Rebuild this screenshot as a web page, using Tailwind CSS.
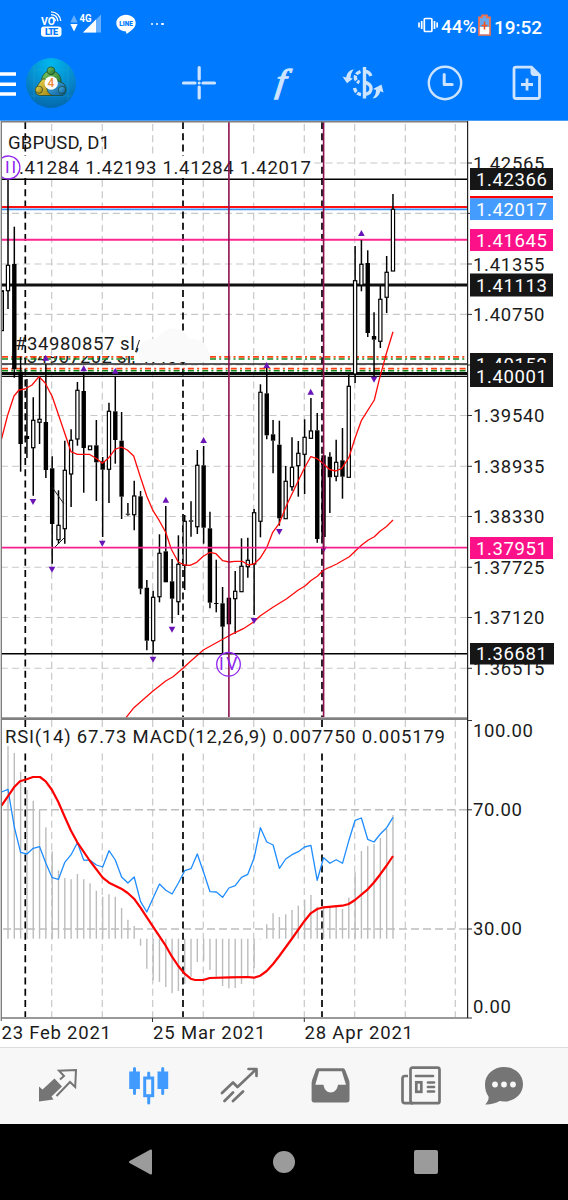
<!DOCTYPE html>
<html lang="en">
<head>
    <meta charset="UTF-8">
    <meta name="viewport" content="width=device-width, initial-scale=1.0">
    <title>GBPUSD, D1</title>
    <script src="https://cdn.jsdelivr.net/npm/@tailwindcss/browser@4"></script>
</head>
<body class="w-[568px] h-[1200px] bg-white overflow-hidden flex flex-col font-['Roboto',sans-serif]">
    <header class="h-[121px] shrink-0 bg-[#007aff] border-b border-[#4a9cf5]">
        <!-- status bar -->
        <div class="h-[46px] flex items-start pt-2.5 pl-10 pr-[25px] text-white">
            <svg class="w-[22px] h-7" viewBox="0 0 22 28" fill="none" stroke="#fff">
                <text x="1" y="15" font-size="11.5" font-weight="700" fill="#fff" stroke="none" textLength="14" lengthAdjust="spacingAndGlyphs">VO</text>
                <path d="M11 1.8c5.5 0 9.3 4 9.7 9.2M11 4.6c3.9 0 6.5 2.800 6.900 6.600M11.500 7.200c2.300.400 3.600 1.800 3.900 4" stroke-width="1.300"/>
                <rect x="1" y="16.500" width="20.500" height="10.300" rx="3" fill="#fff" stroke="none"/>
                <text x="5" y="25" font-size="9" font-weight="900" fill="#007aff" stroke="none" textLength="13">LTE</text>
            </svg>
            <svg class="w-8 h-7 ml-2" viewBox="0 0 32 28">
                <path d="M4 5l3.700 7.500H.3z" fill="#66afff"/>
                <path d="M4 21.500l3.700-7.500H.3z" fill="#fff"/>
                <text x="9.500" y="11.500" font-size="11" font-weight="700" fill="#fff" textLength="12" lengthAdjust="spacingAndGlyphs">4G</text>
                <path d="M31 4.500v18H13z" fill="#66afff"/>
                <path d="M26 9.500v13H13z" fill="#fff"/>
            </svg>
            <svg class="w-5 h-5 ml-[13.500px] mt-[3.500px]" viewBox="0 0 20 20">
                <path d="M10 .7c5.500 0 9.700 3.600 9.700 8.300 0 4.500-4.500 8-9 10.700-.6.200-.5-1-.6-2.300C4.500 17.300.3 13.600.3 9S4.500.7 10 .7z" fill="#fff"/>
                <text x="3.300" y="11.700" font-size="7" font-weight="900" fill="#007aff" textLength="13.500" lengthAdjust="spacingAndGlyphs">LINE</text>
            </svg>
            <div class="flex gap-[2.500px] ml-[15px] mt-[12.500px]">
                <span class="size-[2.700px] rounded-full bg-white"></span>
                <span class="size-[2.700px] rounded-full bg-white"></span>
                <span class="size-[2.700px] rounded-full bg-white"></span>
            </div>
            <svg class="w-5 h-4 ml-auto mt-[6.500px]" viewBox="0 0 20 16" fill="none" stroke="#fff" stroke-width="1.700">
                <rect x="6.300" y="1.500" width="7.600" height="13" rx="1"/>
                <path d="M3.700 4v8M1 5.500v5M16.500 4v8M19.200 5.500v5"/>
            </svg>
            <svg class="w-[37px] h-7 ml-[3px]" viewBox="0 0 37 28"><text x="0" y="22.700" font-size="18.500" font-weight="500" fill="#fff" textLength="35.500" lengthAdjust="spacingAndGlyphs">44%</text></svg>
            <svg class="w-[13px] h-[22px] mt-[3.500px]" viewBox="0 0 13 22">
                <path d="M4 1.300h5v2h3v17.700H1V3.300h3z" fill="#66a8f0" stroke="#f4704a" stroke-width="1.700"/>
                <path d="M1.800 13h9.400v7.200H1.800z" fill="#fff"/>
                <path d="M6.500 7.500v8M3.500 11.500h6" stroke="#f4511e" stroke-width="1.600"/>
            </svg>
            <svg class="w-[49px] h-7 ml-[3px]" viewBox="0 0 49 28"><text x="0" y="23.800" font-size="19" font-weight="500" fill="#fff" textLength="48">19:52</text></svg>
        </div>
        <!-- app bar -->
        <div class="h-[74px] flex items-center">
            <svg class="w-4 h-6 mt-0.5" viewBox="0 0 16 24"><path d="M0 2h16M0 12.300h16M0 22h16" stroke="#fff" stroke-width="3.400"/></svg>
            <svg class="size-[50px] ml-[9.500px]" viewBox="0 0 50 50">
                <defs>
                    <radialGradient id="disc" cx=".5" cy=".1" r=".95"><stop offset="0" stop-color="#00b8ee"/><stop offset=".6" stop-color="#0785c9"/><stop offset="1" stop-color="#0464a8"/></radialGradient>
                    <linearGradient id="gold" x2="1" y2="1"><stop offset="0" stop-color="#f3dc54"/><stop offset="1" stop-color="#9b7d12"/></linearGradient>
                    <linearGradient id="green" x2="1" y2="1"><stop offset="0" stop-color="#7fca64"/><stop offset="1" stop-color="#1d6e2d"/></linearGradient>
                    <linearGradient id="blue" x2="1" y2="1"><stop offset="0" stop-color="#4cb5e8"/><stop offset="1" stop-color="#075999"/></linearGradient>
                </defs>
                <circle cx="25" cy="25" r="25" fill="url(#disc)"/>
                <path d="M8 8v34M42 8v34M8 12h34M4 38h42" stroke="#3db2e2" stroke-width=".6" opacity=".4"/>
                <g stroke="#1d4525" stroke-width=".7">
                    <path d="M15.500 26c-.5-6 1.500-10 5-12h9c4 2 6 6 5.500 12l-5 3H20z" fill="url(#green)"/>
                    <circle cx="25" cy="12.800" r="3.900" fill="url(#green)"/>
                    <path d="M10.500 29l5-7c2-2 5-1 6 2l6 13.500H15c-5 0-7-4-4.500-8.500z" fill="url(#gold)"/>
                    <circle cx="13" cy="31.700" r="3.600" fill="url(#gold)"/>
                    <path d="M29 22l8 3c3.500 3 4.500 9 0 12.500H27c-4-1-6-4-6-7z" fill="url(#blue)"/>
                    <circle cx="36" cy="32" r="3.600" fill="url(#blue)"/>
                </g>
                <circle cx="25.200" cy="25" r="6.700" fill="#fff"/>
                <text x="25" y="29.300" font-size="12" font-weight="500" text-anchor="middle" fill="#f08a3c">4</text>
            </svg>
            <svg class="size-9 ml-[105px]" viewBox="0 0 36 36" stroke="#cce4ff" stroke-width="3.200" stroke-linecap="round">
                <path d="M18.200 2.500v11.500M18.200 22v11M2.500 18h11.500M22 18h11.500"/>
                <path d="M18.200 18h.01" stroke-width="3"/>
            </svg>
            <svg class="w-7 h-9 ml-[50px] overflow-visible" viewBox="0 0 28 36"><text transform="translate(8 26.800) skewX(-7) scale(1.100 1)" x="0" y="0" font-family="Liberation Serif" font-style="italic" font-size="33" fill="#cce4ff" stroke="#cce4ff" stroke-width="1.300">f</text></svg>
            <svg class="w-[42px] h-9 ml-[47px]" viewBox="0 0 42 36" fill="none" stroke="#cce4ff" stroke-width="3.400">
                <path d="M22.500 2v31.500"/>
                <path d="M22.500 6.500c3 0 5.500 1.500 6.300 4.500M22.500 17c4 1.200 6.500 3 6.500 6.500 0 3.300-2.500 5.500-6.500 6"/>
                <path d="M18.500 6.500c-7 2.500-6.500 9-1 11" stroke-dasharray="5 1.300"/>
                <path d="M12.500 23c.7 3.800 3 6 6.500 6.500" stroke-dasharray="4.500 1.300"/>
                <path d="M.5 11.500l3.700 1C4.700 8.500 7.500 5 11.800 4.600 9.500 7.500 8.800 9.500 8.500 12.700l2.300 1-5.800 4.500z" fill="#cce4ff" stroke="none"/>
                <path d="M39.500 19.500l2 8-3.300-1.200c-.7 4-3.700 7.200-7.700 7.200 2.500-2.500 3.500-5 3.500-8.500l-3-1z" fill="#cce4ff" stroke="none"/>
            </svg>
            <svg class="size-9 ml-[43px]" viewBox="0 0 36 36" fill="none" stroke="#cce4ff" stroke-width="2.400">
                <circle cx="18" cy="18" r="16.200"/>
                <path d="M17.200 9.500v10h8" stroke-width="3" stroke-linejoin="round" stroke-linecap="round"/>
            </svg>
            <svg class="w-[30px] h-9 ml-[49px]" viewBox="0 0 30 36" fill="none" stroke="#cce4ff">
                <path d="M4 2.200h15.500L27.500 10v21.500c0 1.200-.8 2-2 2H4c-1.200 0-2-.8-2-2V4.200c0-1.200.8-2 2-2z" stroke-width="2.800"/>
                <path d="M18.500 1.500v6c0 2 1.300 3.500 3.500 3.500h6z" fill="#cce4ff" stroke="none"/>
                <path d="M15 13.500v12M9 19.500h12" stroke-width="2.800"/>
            </svg>
        </div>
    </header>

    <main class="h-[926px] shrink-0">
        <svg id="chart" class="block w-[568px] h-[926px]" viewBox="0 121 568 926" font-size="18.500" fill="#1b1b1b"></svg>
    </main>

    <nav class="h-[77px] shrink-0 bg-[#f7f7f7] border-t border-[#dcdcdc] flex items-center pl-[38px] pb-0.5">
        <svg class="size-10" viewBox="0 0 40 40" fill="none" stroke="#757575" stroke-width="2">
            <path d="M16.500 13.500l7.500 8L13.500 31.500l2 3-14.500 2V21.500l3.500 3z" fill="#757575" stroke="none"/>
            <path d="M22 14.500l4-3.500-5-5.300L38 5l-.8 17-5.200-5L18.500 31"/>
        </svg>
        <svg class="size-10 ml-[51px]" viewBox="0 0 40 40" fill="#419bff" stroke="#419bff" stroke-width="3">
            <path d="M5.500 3.500v25M33.700 3.500v25M19.700 8v6M19.700 32v6" stroke-linecap="round"/>
            <rect x="1.200" y="7.500" width="8.700" height="15.500" stroke-width="2"/>
            <rect x="29.500" y="7.500" width="8.700" height="15.500" stroke-width="2"/>
            <rect x="15.700" y="13" width="8" height="17.700" fill="#f7f7f7"/>
        </svg>
        <svg class="size-10 ml-[51px]" viewBox="0 0 40 40" fill="none" stroke="#757575" stroke-width="2.700" stroke-linecap="round" stroke-linejoin="round">
            <path d="M2 28L13 17.500l4.500 4.500L36 4.500M28.500 4h8v7M4.500 36l8.500-8.500M13 36l10-9.500"/>
        </svg>
        <svg class="size-10 ml-[51px]" viewBox="0 0 40 40">
            <path d="M7.500 3.300h24c1.300 0 2.200.6 2.700 1.800l3.600 9.500c.6 1.400.7 2.500.7 4V35c0 1.600-1 2.500-2.500 2.500H3C1.500 37.500.6 36.600.6 35V18.600c0-1.500.2-2.600.7-4l3.500-9.500c.5-1.200 1.400-1.800 2.700-1.800z" fill="#757575"/>
            <path d="M8.200 6.300h22.600L35 19.800h-8c-.5 4.500-3.500 7.700-7.300 7.700S13 24.300 12.500 19.800H4.300z" fill="#f7f7f7"/>
        </svg>
        <svg class="size-10 ml-[50px]" viewBox="0 0 40 40" fill="none" stroke="#757575" stroke-width="2.700">
            <rect x="9.500" y="2.700" width="29" height="35.500" rx="2"/>
            <path d="M7 11H4c-1.500 0-2.500 1-2.500 2.500v22C1.500 37 2.500 38.200 4 38.200h8"/>
            <path d="M15 11h17M27 17.500h6M27 22h6M27 26.500h6" stroke-linecap="round"/>
            <rect x="15.300" y="17.300" width="5" height="9.500"/>
        </svg>
        <svg class="size-10 ml-[43px]" viewBox="0 0 40 40">
            <path d="M20 2c10.500 0 19 7.500 19 17.200S30.500 36.500 20 36.500c-1.500 0-3-.2-4.300-.5C11.500 38.500 6 39.800 1.200 39.500 4 36.500 5 34 4.500 31.500 2 28 1 24 1 19.200 1 9.500 9.500 2 20 2z" fill="#757575"/>
            <g fill="#f7f7f7"><circle cx="11" cy="19.500" r="2.900"/><circle cx="20" cy="19.500" r="2.900"/><circle cx="29" cy="19.500" r="2.900"/></g>
        </svg>
    </nav>

    <footer class="flex-1 bg-black flex items-center justify-center gap-[119px] pr-0.5">
        <svg class="size-[26px]" viewBox="0 0 26 26"><path d="M23 1.500v23L2 13z" fill="#9b9b9b" stroke="#9b9b9b" stroke-width="2" stroke-linejoin="round"/></svg>
        <div class="size-[22px] rounded-full bg-[#9b9b9b]"></div>
        <div class="size-6 rounded-[2px] bg-[#9b9b9b]"></div>
    </footer>

    <script>
        const BAR_START = 8;
        const BAR_STEP = 6.311;
        const barX = i => BAR_START + BAR_STEP * i;

        // [high, body top, body bottom, low, filled]
        const candles = [
            [180, 265.3, 290.7, 309, 0], [226.7, 264, 369.3, 377.7, 1], [356.7, 371.7, 444, 471.7, 1], [379, 436, 439, 458, 1],
            [397.3, 420.3, 447.7, 495.7, 0], [376, 419.3, 422.3, 444, 0], [364.3, 422, 470, 478, 1], [456.3, 468.3, 524, 563.7, 1],
            [490.3, 525.3, 539.7, 544, 0], [440.7, 470.3, 528.7, 543.7, 0], [429.3, 440.3, 474, 507, 0], [382, 390.3, 439, 445.7, 0],
            [373, 391, 448, 492.7, 1], [446, 446, 449.7, 449.7, 0], [420, 445.3, 462.3, 501, 1], [457, 461.3, 469.7, 537, 1],
            [402.7, 411.3, 469.3, 503, 0], [376.7, 411.3, 440, 463.7, 1], [412, 440.7, 496.7, 519, 1], [503, 513.7, 514.7, 515.7, 1],
            [480.7, 496, 514.7, 530.3, 0], [491, 496.3, 588.7, 594.3, 1], [580, 587.7, 640.7, 650.3, 1], [590.7, 597.3, 640.7, 653.3, 0],
            [534.3, 553.3, 596.7, 602.3, 0], [506, 551.3, 582.3, 582.3, 1], [559, 581.3, 598.7, 623.3, 1], [535.3, 564.3, 601.7, 615, 0],
            [515, 521.3, 565.3, 590, 0], [501.3, 520.3, 521.7, 536.7, 1], [450, 465.3, 526.7, 534, 0], [446, 465.3, 527.7, 543.7, 1],
            [511.7, 528.3, 602.7, 608.3, 1], [559.7, 603, 604, 612.3, 1], [587, 603.3, 626.7, 653.3, 1], [597.7, 597.7, 624.3, 624.3, 1],
            [571, 591.3, 598.7, 633.7, 0], [538.3, 566.3, 591.7, 591.7, 0], [537.7, 560.3, 566.7, 577.7, 0], [509, 512.7, 564, 615, 0],
            [384.3, 392.3, 521.3, 537.3, 0], [368, 393.3, 435.3, 439.3, 1], [420, 434.3, 440.7, 473.3, 1], [420.7, 444.7, 518.3, 525.7, 1],
            [466, 481.3, 518.7, 518.7, 0], [437.3, 467.3, 486.7, 490.7, 0], [441, 453.3, 465.7, 496.7, 0], [419.3, 437.3, 454.3, 494, 0],
            [398, 431, 438.3, 438.3, 0], [413, 430.3, 539, 542.7, 1], [455.3, 455.3, 537, 549, 1], [452.3, 456.7, 477.3, 513, 1],
            [439.7, 462.3, 476.3, 481.3, 0], [428, 460.3, 476.7, 498.7, 1], [374, 386.3, 477.3, 477.3, 0], [246, 280.7, 374, 383, 0],
            [240, 264.3, 285, 291.3, 0], [250.3, 263, 333, 337, 1], [312.3, 336, 339.7, 377, 1], [286, 299.3, 341.3, 348, 0],
            [256, 272.3, 297.3, 313, 0], [194, 209.3, 271, 271, 0]
        ];

        const rsi = [789.3, 827, 852.3, 854, 848.3, 846.7, 863.3, 877.7, 879.3, 862.3, 854.7, 842.7, 860, 860.3, 865, 867, 850.7, 860, 877, 883, 877,
            901.3, 912, 897.7, 884, 890.3, 894, 883, 870.7, 868.7, 854, 872.3, 891.7, 892, 897.3, 888, 885.7, 877.3, 874.3, 858, 827.7, 842, 845,
            868.3, 859, 854.7, 851.7, 847, 845.3, 880.3, 857.7, 863.3, 859.7, 863.3, 840.7, 820.3, 818, 839.3, 842, 834, 827.7, 817.3];

        const macd = [746, 753, 772, 790, 800.7, 810, 827.3, 851.3, 870.3, 878, 879.3, 874, 879.3, 883.3, 890.7, 896.7, 894.3, 896.7, 908, 919.7, 926,
            945.7, 968.7, 980.3, 982, 987, 993.3, 991, 983.7, 976.7, 962, 960.7, 970, 976.7, 986, 988.3, 988, 984, 977.7, 968, 939.3, 924.3, 913.3,
            917, 914.3, 910, 905.7, 900, 895, 906.7, 906, 907.3, 905, 909, 897.7, 872.3, 851, 846, 844, 838, 829, 815];

        const fastMa = '1.5,439 7.7,415 14,396 19,390 25,389 32,385 39,376.7 45,382.7 52.3,396.7 60,419.3 71,451.7 77.3,454.3 89.3,454.3 96.7,458.7 102.3,463.3 108.3,458.3 115,449.3 121.3,447 127.3,450 133.7,456 140.3,476.7 146.7,496 153,510.7 159.3,520.7 165.7,532.3 171.3,549.3 178.3,562 184.3,565 190,565.3 196.7,562.3 203.3,556.3 210,552.3 216,553.7 222.7,560.7 229,562 235,561.3 242.3,561.3 248.3,565 254,564 260,558.3 266.7,547.7 272.7,532.3 279.3,523.3 286.7,505 298.3,480.7 304.3,468.3 310.7,456.7 317.3,458.7 323.7,464 329.3,469.3 335.7,471 341.7,468.3 349,457.3 355,438.3 361.3,420.7 374.3,400 379.3,379.3 386.5,353 393,331.7';
        const slowMa = '126,717.7 133.3,708.3 153,691 165.7,681 173,676.7 183,668.3 190,661.7 203.3,650 229,635.7 243.3,628.7 254,621.7 260,616 273.3,607 286.7,598.7 298.3,590 305,586 310.7,580.7 317.3,576.3 323.7,570 336.7,564 349.3,556.7 361.7,545 368.3,540 374.3,536.7 380,531.3 386.5,526.5 393,520';
        const signal = '1.5,805.7 7.7,796.7 14,787.3 20,781.3 26.7,779.3 33,777 40,777 45.7,781.3 52,790 58.3,802 64.7,816.7 71,830.7 77.3,842.3 90,861 102.7,877.7 109,882.7 121.3,888.7 127.7,893 134,898.7 140.3,907.3 153,926.7 165.7,945.7 172,956.7 178.3,966 184.3,973.3 190.7,978.7 195,980 203.3,980 209.7,978 230,977.3 247.7,977 254,977.7 260.3,975.7 266.7,971 273.3,963.7 279.3,956 291.7,939 304.7,920.7 310.7,913.3 317.3,909 323.7,907.3 342.3,905.7 348.7,904 355,900 367.7,889.3 373.7,882.7 380,874.7 386.3,866 393,856';

        const up = [[45.7, 358], [83.7, 368.5], [115.3, 371], [165.8, 500], [203.6, 440.3], [266.7, 365.3], [310.7, 392], [361.4, 233.3]];
        const down = [[33, 501.7], [52, 569.5], [102.3, 543.5], [153, 659.5], [172, 629.5], [254, 620.8], [279.3, 531.7], [323.7, 549.5], [374, 379.5]];

        let out = '';
        const line = (x1, y1, x2, y2, color, width, dash = '') =>
            out += `<line x1="${x1}" y1="${y1}" x2="${x2}" y2="${y2}" stroke="${color}" stroke-width="${width}" ${dash && `stroke-dasharray="${dash}"`}/>`;
        const rect = (x, y, w, h, fill, extra = '') =>
            out += `<rect x="${x}" y="${y}" width="${w}" height="${h}" fill="${fill}" ${extra}/>`;
        const text = (x, y, w, str, fill = '#1b1b1b', extra = '') =>
            out += `<text x="${x}" y="${y}" textLength="${w}" fill="${fill}" ${extra}>${str}</text>`;
        const poly = (points, color, width) =>
            out += `<polyline points="${points}" fill="none" stroke="${color}" stroke-width="${width}" stroke-linejoin="round"/>`;

        // grid
        [51.7, 102.3, 152.7, 203.3, 253.7, 304.3, 354.7, 405.3, 455.3].forEach(x => {
            line(x, 124, x, 717, '#c8c8c8', 1.2, '7 4.2');
            line(x, 720, x, 1017, '#c8c8c8', 1.2, '7 4.2');
        });
        const levels = [163, 213.4, 264, 314.4, 365, 415.5, 466.3, 516.5, 567.3, 617.5, 668.3];
        levels.forEach(y => line(467, y, 2, y, '#c8c8c8', 1.1, '7 4.2'));
        [809.8, 929].forEach(y => line(467, y, 2, y, '#bdbdbd', 1.4, '8 4'));

        // month separators
        [25.3, 183, 322].forEach(x => {
            line(x, 122, x, 717, '#000', 1.7, '7 4.2');
            line(x, 720, x, 1017, '#000', 1.7, '7 4.2');
        });
        rect(2, 156, 312, 21, '#fff');
        rect(2, 727, 446, 24, '#fff');

        text(8, 149, 102, 'GBPUSD, D1');
        text(19, 174.4, 292, '.41284 1.42193 1.41284 1.42017');

        // order labels
        out += '<defs><clipPath id="low"><rect x="24" y="356" width="180" height="8"/></clipPath></defs>';
        text(15, 363, 173, '#34907202 sl, 1.400', '#1b1b1b', 'clip-path="url(#low)"');
        text(15, 350.3, 124, '#34980857 sl,');
        line(139.5, 340, 135.5, 352, '#222', 1);
        out += '<path d="M140 360c-5-11 2-22 17-21 7-14 26-14 32 0 12-2 22 8 20 19l-2 4h-66z" fill="#fafafa"/>';

        // horizontal levels
        line(1, 179.3, 468, 179.3, '#000', 1.5);
        line(1, 206.9, 468, 206.9, '#ff1010', 2);
        line(1, 209.3, 468, 209.3, '#3b95f5', 1.7);
        line(1, 239.8, 468, 239.8, '#ff2492', 2);
        line(1, 285, 468, 285, '#111', 2.8);
        const dashDot = '6 3.2 2 3.1';
        line(2, 356.9, 134, 356.9, '#ff4010', 1.7, dashDot);
        line(2, 359, 134, 359, '#118a20', 1.6, dashDot);
        line(210, 356.9, 466, 356.9, '#ff4010', 1.7, dashDot);
        line(210, 359, 466, 359, '#118a20', 1.6, dashDot);
        line(2, 368.6, 466, 368.6, '#ff4010', 1.7, dashDot);
        line(2, 370.7, 466, 370.7, '#118a20', 1.6, dashDot);
        line(1, 364, 468, 364, '#222', 1.5);
        line(1, 373.5, 468, 373.5, '#0c0c0c', 2.8);
        line(1, 376.4, 468, 376.4, '#0c0c0c', 1.3);

        // candles
        rect(1.5, 290.7, 2, 40, '#999', 'stroke="#000" stroke-width="1"');
        candles.forEach(([high, top, bottom, low, filled], i) => {
            const x = barX(i);
            if (high < top) line(x, high, x, top, '#000', 1.5);
            if (low > bottom) line(x, bottom, x, low, '#000', 1.5);
            if (filled) rect(x - 2.2, top, 4.4, bottom - top, '#000');
            else rect(x - 1.6, top, 3.2, bottom - top, '#fff', 'stroke="#000" stroke-width="1.2"');
        });
        poly('52,487 64,504', '#222', 1);
        poly('54,548 64,538', '#222', 1);

        poly(fastMa, '#ff0a0a', 1.3);
        poly(slowMa, '#ff0a0a', 1.3);
        up.forEach(([x, y]) => out += `<path d="M${x - 3.3} ${y + 2.8}h6.600l-3.300-6z" fill="#6a14b8"/>`);
        down.forEach(([x, y]) => out += `<path d="M${x - 3.3} ${y - 2.8}h6.600l-3.300 6z" fill="#6a14b8"/>`);

        line(1, 547.7, 468, 547.7, '#f5208c', 1.8);
        line(1, 653.7, 468, 653.7, '#000', 1.5);
        line(228.9, 122, 228.9, 717, '#8f0f50', 1.6);
        line(323.6, 122, 323.6, 717, '#8f0f50', 1.6);

        // wave marks
        out += '<g fill="none" stroke="#9125f0" stroke-width="1.3"><path d="M1.5 158.300a11.500 11.500 0 1 1 0 18.400"/><circle cx="228.500" cy="664.300" r="11.800"/></g>';
        text(5, 173.2, 11, 'II', '#9125f0', 'font-size="17"');
        text(219, 670, 18.5, 'IV', '#9125f0', 'font-size="17.500"');

        // indicator window
        macd.forEach((y, i) => line(barX(i), y, barX(i), 938.7, '#bcbcbc', 1.4));
        poly('1.5,792 ' + rsi.map((y, i) => `${barX(i).toFixed(1)},${y}`).join(' '), '#1e8cff', 1.3);
        poly(signal, '#ff0000', 2.2);
        text(5, 742.8, 440, 'RSI(14) 67.73 MACD(12,26,9) 0.007750 0.005179');

        // frames
        line(1, 121.6, 467, 121.6, '#808080', 1.6);
        line(1.3, 121, 1.3, 1021, '#777', 1.3);
        rect(1, 717.3, 467, 2.7, '#808080');
        line(1, 1018, 468, 1018, '#777', 1.6);
        line(467.6, 121, 467.6, 1018, '#222', 1.2);
        [152.5, 304.3].forEach(x => line(x, 1018, x, 1022, '#333', 1));

        // price scale
        ['1.42565', '', '1.41355', '1.40750', '', '1.39540', '1.38935', '1.38330', '1.37725', '1.37120', '1.36515'].forEach((s, i) => {
            line(468, levels[i], 472, levels[i], '#333', 1);
            if (s) text(473, levels[i] + 6.6, 71.5, s);
        });
        [720.5, 809.8, 929, 1018].forEach(y => line(468, y, 472, y, '#333', 1));
        text(473, 737.4, 60, '100.00');
        text(473, 816.2, 49, '70.00');
        text(473, 935.4, 49, '30.00');
        text(473, 1013.2, 38, '0.00');

        const badge = (y, h, bg, s, w = 83) => {
            rect(470, y, w, h, bg);
            text(476, y + h / 2 + 6.6, 71, s, '#fff');
        };
        badge(168, 22, '#161616', '1.42366');
        rect(470, 196, 83, 2.5, '#f00');
        badge(198.3, 21.7, '#459cff', '1.42017');
        badge(229, 22, '#fc1188', '1.41645');
        badge(273.5, 23, '#161616', '1.41113');
        badge(353, 22, '#161616', '1.40152');
        rect(470, 363, 83, 24, '#161616');
        text(476, 383, 71, '1.40001', '#fff');
        badge(537, 22, '#fc1188', '1.37951');
        badge(643, 21.5, '#161616', '1.36681', 84);

        // dates
        text(1.5, 1038.5, 109.5, '23 Feb 2021');
        text(153, 1038.5, 112.5, '25 Mar 2021');
        text(304.5, 1038.5, 108.5, '28 Apr 2021');

        document.getElementById('chart').innerHTML = out;
    </script>
</body>
</html>
